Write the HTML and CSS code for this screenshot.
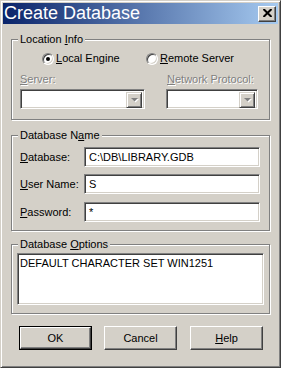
FILE: index.html
```
<!DOCTYPE html>
<html>
<head lang="en">
    <meta charset="UTF-8">
    <title>Create Database</title>
    <link rel="stylesheet" href="styles.css">
</head>
<body>
<div class="window">
    <div class="titlebar">
        <span class="title">Create Database</span>
        <span class="close">
            <svg width="9" height="8" viewBox="0 0 9 8">
                <path d="M0.5 0 L8.5 8 M8.5 0 L0.5 8" stroke="#000" stroke-width="2" fill="none"/>
            </svg>
        </span>
    </div>
    <div class="content">
        <!-- location -->
        <div class="group g-location">
            <span class="legend">Location <u>I</u>nfo</span>
            <div class="radios">
                <label class="opt opt-local"><span class="radio on"></span><span><u>L</u>ocal Engine</span></label>
                <label class="opt"><span class="radio"></span><span><u>R</u>emote Server</span></label>
            </div>
            <div class="cols">
                <div class="col col-server">
                    <span class="label disabled"><u>S</u>erver:</span>
                    <div class="combo">
                        <span class="drop">
                            <svg width="8" height="5" viewBox="0 0 8 5">
                                <path d="M1 1 L8 1 L4.5 4.5 Z" fill="#fff"/>
                                <path d="M0 0 L7 0 L3.5 3.5 Z" fill="#808080"/>
                            </svg>
                        </span>
                    </div>
                </div>
                <div class="col col-proto">
                    <span class="label disabled"><u>N</u>etwork Protocol:</span>
                    <div class="combo">
                        <span class="drop">
                            <svg width="8" height="5" viewBox="0 0 8 5">
                                <path d="M1 1 L8 1 L4.5 4.5 Z" fill="#fff"/>
                                <path d="M0 0 L7 0 L3.5 3.5 Z" fill="#808080"/>
                            </svg>
                        </span>
                    </div>
                </div>
            </div>
        </div>

        <!-- name -->
        <div class="group g-name">
            <span class="legend">Database N<u>a</u>me</span>
            <div class="field">
                <span class="label"><u>D</u>atabase:</span>
                <div class="edit">C:\DB\LIBRARY.GDB</div>
            </div>
            <div class="field">
                <span class="label"><u>U</u>ser Name:</span>
                <div class="edit">S</div>
            </div>
            <div class="field f-pass">
                <span class="label"><u>P</u>assword:</span>
                <div class="edit">*</div>
            </div>
        </div>

        <!-- options -->
        <div class="group g-options">
            <span class="legend">Database <u>O</u>ptions</span>
            <div class="memo">DEFAULT CHARACTER SET WIN1251</div>
        </div>

        <div class="buttons">
            <div class="btn default"><span class="face">OK</span></div>
            <div class="btn"><span class="face">Cancel</span></div>
            <div class="btn"><span class="face"><u>H</u>elp</span></div>
        </div>
    </div>
</div>
</body>
</html>
```

FILE: styles.css
```
*
{
    margin: 0;
    padding: 0;
    box-sizing: border-box;
}
body
{
    background: #d4d0c8;
    font-family: "Liberation Sans", Arial, sans-serif;
    font-size: 11px;
    line-height: 13px;
    color: #000;
}
u
{
    text-decoration: underline;
}

.window
{
    width: 281px;
    height: 368px;
    background: #d4d0c8;
    border: 1px solid;
    border-color: #d4d0c8 #404040 #404040 #d4d0c8;
    box-shadow: inset 1px 1px #fff, inset -1px -1px #808080;
    padding: 2px;
    display: flex;
    flex-direction: column;
}

/* title */
.titlebar
{
    height: 21px;
    background: linear-gradient(to right, #0a246a, #a6caf0);
    display: flex;
    align-items: center;
    justify-content: space-between;
    padding: 0 2px 0 1px;
}
.title
{
    color: #fff;
    font-size: 18px;
    line-height: 21px;
}
.close
{
    width: 18px;
    height: 16px;
    background: #d4d0c8;
    border: 1px solid;
    border-color: #fff #404040 #404040 #fff;
    box-shadow: inset -1px -1px #808080;
    display: flex;
    align-items: center;
    justify-content: center;
    padding-bottom: 1px;
}

.content
{
    padding: 0 8px;
    display: flex;
    flex-direction: column;
}

/* group boxes */
.group
{
    position: relative;
    border: 1px solid #808080;
    box-shadow: inset 1px 1px #fff, 1px 1px #fff;
}
.legend
{
    position: absolute;
    top: -7px;
    left: 6px;
    padding: 0 2px;
    background: #d4d0c8;
}

.g-location
{
    margin-top: 15px;
    height: 81px;
    padding: 12px 9px 0 8px;
}
.radios
{
    display: flex;
    height: 13px;
    align-items: center;
    padding-left: 22px;
}
.opt
{
    display: flex;
    align-items: center;
    gap: 2px;
}
.opt-local
{
    width: 104px;
}
.radio
{
    position: relative;
    width: 12px;
    height: 12px;
    border-radius: 50%;
    border: 1px solid;
    border-color: #808080 #fff #fff #808080;
    box-shadow: inset 1px 1px #404040, inset -1px -1px #d4d0c8;
    background: #fff;
}
.radio.on::after
{
    content: '';
    position: absolute;
    left: 3px;
    top: 3px;
    width: 4px;
    height: 4px;
    border-radius: 50%;
    background: #000;
}

.cols
{
    display: flex;
    gap: 21px;
    margin-top: 8px;
}
.col
{
    display: flex;
    flex-direction: column;
    gap: 3px;
}
.col-server
{
    width: 125px;
}
.col-proto
{
    width: 92px;
    padding-left: 1px;
}
.col-proto .combo
{
    margin-left: -1px;
}
.disabled
{
    color: #808080;
    text-shadow: 1px 1px #fff;
}

.combo,
.edit,
.memo
{
    background: #fff;
    border: 1px solid;
    border-color: #808080 #fff #fff #808080;
    box-shadow: inset 1px 1px #404040, inset -1px -1px #d4d0c8;
}
.combo
{
    height: 20px;
    display: flex;
    justify-content: flex-end;
    padding: 2px;
}
.drop
{
    width: 16px;
    height: 16px;
    background: #d4d0c8;
    border: 1px solid;
    border-color: #d4d0c8 #404040 #404040 #d4d0c8;
    box-shadow: inset 1px 1px #fff, inset -1px -1px #808080;
    display: flex;
    align-items: center;
    justify-content: center;
    padding: 1px 0 0 1px;
}

/* name */
.g-name
{
    margin-top: 15px;
    height: 96px;
    padding: 11px 9px 0 8px;
    display: flex;
    flex-direction: column;
    gap: 7px;
}
.field
{
    display: flex;
    align-items: center;
}
.f-pass
{
    margin-top: 1px;
}
.field .label
{
    width: 64px;
}
.edit
{
    flex: 1;
    height: 20px;
    line-height: 16px;
    padding: 1px 4px;
}

/* options */
.g-options
{
    margin-top: 13px;
    height: 70px;
    padding: 8px 5px;
}
.memo
{
    height: 52px;
    padding: 3px 2px;
}

/* buttons */
.buttons
{
    display: flex;
    gap: 12px;
    margin-top: 12px;
    padding-left: 8px;
}
.btn
{
    width: 73px;
    height: 24px;
    display: flex;
}
.face
{
    flex: 1;
    display: flex;
    align-items: center;
    justify-content: center;
    border: 1px solid;
    border-color: #fff #404040 #404040 #fff;
    box-shadow: inset -1px -1px #808080;
}
.btn.default
{
    border: 1px solid #000;
}
.btn:nth-child(3)
{
    margin-left: 1px;
}
```
